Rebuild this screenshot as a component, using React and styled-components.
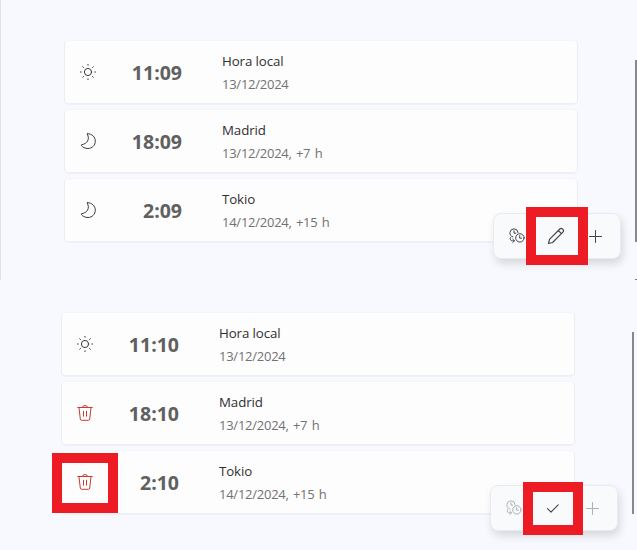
import styled, { createGlobalStyle } from "styled-components";

const GlobalStyle = createGlobalStyle`
  * {
    box-sizing: border-box;
  }

  body {
    margin: 0;
    background-color: #F8F9FE;
    font-family: 'Open Sans', 'Noto Sans', sans-serif;
    overflow: hidden;
  }
`;

const Page = styled.main`
  width: 637px;
  height: 550px;
`;

const Panel = styled.section`
  position: relative;
  display: flex;
  justify-content: space-between;
  width: ${props => props.$editing ? '634px' : '637px'};
  height: ${props => props.$editing ? '270px' : '280px'};
  padding-top: ${props => props.$editing ? '32px' : '40px'};
  padding-left: ${props => props.$editing ? '61px' : '63px'};
  border-left: ${props => props.$editing ? 'none' : '1px solid #E4E4E8'};
`;

const ClockList = styled.ul`
  display: flex;
  flex-direction: column;
  gap: 4px;
  width: 514px;
  margin: 0;
  padding: 0;
  list-style: none;
`;

const ClockCard = styled.li`
  display: flex;
  align-items: center;
  height: 65px;
  padding-left: 15px;
  background-color: #FDFDFD;
  border: 1px solid #ECEDF2;
  border-top-color: #F4F5F9;
  border-bottom: 2px solid #EFF0F5;
  border-radius: 5px;
`;

const StateIcon = styled.span`
  display: flex;
  width: 16px;
  height: 16px;
  color: ${props => props.$danger ? '#C93A32' : '#3B3B3B'};
`;

const Time = styled.span`
  width: 86px;
  padding-top: 1px;
  text-align: right;
  color: #606060;
  font-size: 19.5px;
  font-weight: 700;
  line-height: 28px;
`;

const Place = styled.div`
  display: flex;
  flex-direction: column;
  margin-left: 40px;
  padding-top: 2px;
`;

const City = styled.span`
  color: #303030;
  font-size: 13.3px;
  line-height: 23px;
  letter-spacing: -0.1px;
`;

const DateText = styled.span`
  color: #727272;
  font-size: 13px;
  line-height: 23px;
  letter-spacing: -0.25px;
  word-spacing: 1.2px;
`;

const Scrollbar = styled.div`
  width: 2px;
  height: 182px;
  margin-top: 20px;
  background-color: #87888B;
`;

const CommandBar = styled.div`
  position: absolute;
  right: 16px;
  top: ${props => props.$editing ? '205px' : '213px'};
  display: flex;
  align-items: center;
  width: 128px;
  height: 46px;
  padding-left: 3px;
  background-color: #F9FAFC;
  border: 1px solid #E9EAED;
  border-radius: 8px;
  box-shadow: 2px 5px 9px rgba(0, 0, 0, 0.13);
`;

const CommandButton = styled.button`
  display: flex;
  align-items: center;
  justify-content: center;
  width: 39px;
  height: 38px;
  padding: 0;
  background: none;
  border: 0;
  color: #444444;

  &:disabled {
    color: #B0B0B0;
  }

  &:last-child {
    margin-left: 1px;
  }
`;

const Highlight = styled.div`
  position: absolute;
  border: 10px solid #ED1C24;
`;

const EditHighlight = styled(Highlight)`
  left: 525px;
  top: 207px;
  width: 62px;
  height: 58px;
`;

const DoneHighlight = styled(Highlight)`
  left: 523px;
  top: 202px;
  width: 60px;
  height: 53px;
`;

const DeleteHighlight = styled(Highlight)`
  left: 52px;
  top: 173px;
  width: 66px;
  height: 60px;
`;

const CornerMark = styled.div`
  position: absolute;
  right: 0;
  bottom: 0;
  width: 2px;
  height: 1px;
  background-color: #77787B;
`;

const Svg = styled.svg`
  display: block;
  overflow: visible;
  fill: none;
  stroke: currentColor;
  stroke-width: 1;
  stroke-linecap: round;
  stroke-linejoin: round;
`;

function SunIcon() {
  return (
    <Svg width="16" height="16" viewBox="0 0 16 16">
      <circle cx="8" cy="8" r="3.6" />
      <path d="M8 .4v.8M8 14.8v.8M.4 8h.8M14.8 8h.8M2.7 2.7l.8.8M12.5 12.5l.8.8M2.7 13.3l.8-.8M12.5 3.5l.8-.8" />
    </Svg>
  );
}

function MoonIcon() {
  return (
    <Svg width="16" height="16" viewBox="0 0 16 16">
      <path d="M7.6.7C12 .6 15.3 4 15.3 8.2c0 4.1-3.3 7.3-7.3 7.3-2.8 0-5.3-1.2-6.8-3.1-.2-.3-.1-.5.2-.6C4.5 11.2 6.5 10 7.6 8 8.7 6 8.6 3.6 7.3 1.3c-.2-.3 0-.6.3-.6z" />
    </Svg>
  );
}

function TrashIcon() {
  return (
    <Svg width="16" height="16" viewBox="0 0 16 16">
      <path d="M.7 2.5h14.6M5.5 2.5a2.5 2 0 0 1 5 0M2 2.8l1.3 11.3a1.3 1.3 0 0 0 1.3 1.2h6.8a1.3 1.3 0 0 0 1.3-1.2L14 2.8M6.5 6.3v4.9M9.5 6.3v4.9" />
    </Svg>
  );
}

function CompareIcon() {
  return (
    <Svg width="16" height="16" viewBox="0 0 16 16">
      <path d="M3.9 8.9A4.1 4.1 0 1 1 9.1 4.6" />
      <path d="M5 2.8v2.4h1.9" />
      <circle cx="10.9" cy="9.9" r="4.2" />
      <path d="M10.7 7.7v2.5h1.8M1.5 9.6c-.9 1.9.1 3.2 1.8 3.2h2M3.8 11.2l1.7 1.6-1.7 1.7" />
    </Svg>
  );
}

function PencilIcon() {
  return (
    <Svg width="18" height="18" viewBox="0 0 18 18">
      <path d="M1.5 16.5l1-4.2L12.8 2c1.8-1.8 5 1.2 3.1 3.2L5.6 15.5zM11.3 3.5l3.1 3.2" strokeWidth="1.15" />
    </Svg>
  );
}

function CheckIcon() {
  return (
    <Svg width="14" height="12" viewBox="0 0 14 12">
      <path d="M1.5 6.6l3.5 3.5 7.2-7.3" strokeWidth="1.1" />
    </Svg>
  );
}

function PlusIcon() {
  return (
    <Svg width="13" height="13" viewBox="0 0 13 13">
      <path d="M6.5.5v12M.5 6.5h12" />
    </Svg>
  );
}

const icons = {
  sun: SunIcon,
  moon: MoonIcon,
  trash: TrashIcon,
};

const clocks = [
  { icon: "sun", time: "11:09", city: "Hora local", date: "13/12/2024" },
  { icon: "moon", time: "18:09", city: "Madrid", date: "13/12/2024, +7 h" },
  { icon: "moon", time: "2:09", city: "Tokio", date: "14/12/2024, +15 h" },
];

const editingClocks = [
  { icon: "sun", time: "11:10", city: "Hora local", date: "13/12/2024" },
  { icon: "trash", time: "18:10", city: "Madrid", date: "13/12/2024, +7 h" },
  { icon: "trash", time: "2:10", city: "Tokio", date: "14/12/2024, +15 h" },
];

function Clocks({ items }) {
  return (
    <ClockList>
      {items.map(({ icon, time, city, date }) => {
        const Icon = icons[icon];
        return (
          <ClockCard key={city}>
            <StateIcon $danger={icon === "trash"}>
              <Icon />
            </StateIcon>
            <Time>{time}</Time>
            <Place>
              <City>{city}</City>
              <DateText>{date}</DateText>
            </Place>
          </ClockCard>
        );
      })}
    </ClockList>
  );
}

function Commands({ editing }) {
  return (
    <CommandBar $editing={editing}>
      <CommandButton disabled={editing} aria-label="Comparar">
        <CompareIcon />
      </CommandButton>
      <CommandButton aria-label={editing ? "Listo" : "Editar"}>
        {editing ? <CheckIcon /> : <PencilIcon />}
      </CommandButton>
      <CommandButton disabled={editing} aria-label="Agregar">
        <PlusIcon />
      </CommandButton>
    </CommandBar>
  );
}

export default function App() {
  return (
    <>
      <GlobalStyle />
      <Page>
        <Panel>
          <Clocks items={clocks} />
          <Scrollbar />
          <Commands editing={false} />
          <EditHighlight />
          <CornerMark />
        </Panel>
        <Panel $editing>
          <Clocks items={editingClocks} />
          <Scrollbar />
          <Commands editing />
          <DoneHighlight />
          <DeleteHighlight />
        </Panel>
      </Page>
    </>
  );
}
